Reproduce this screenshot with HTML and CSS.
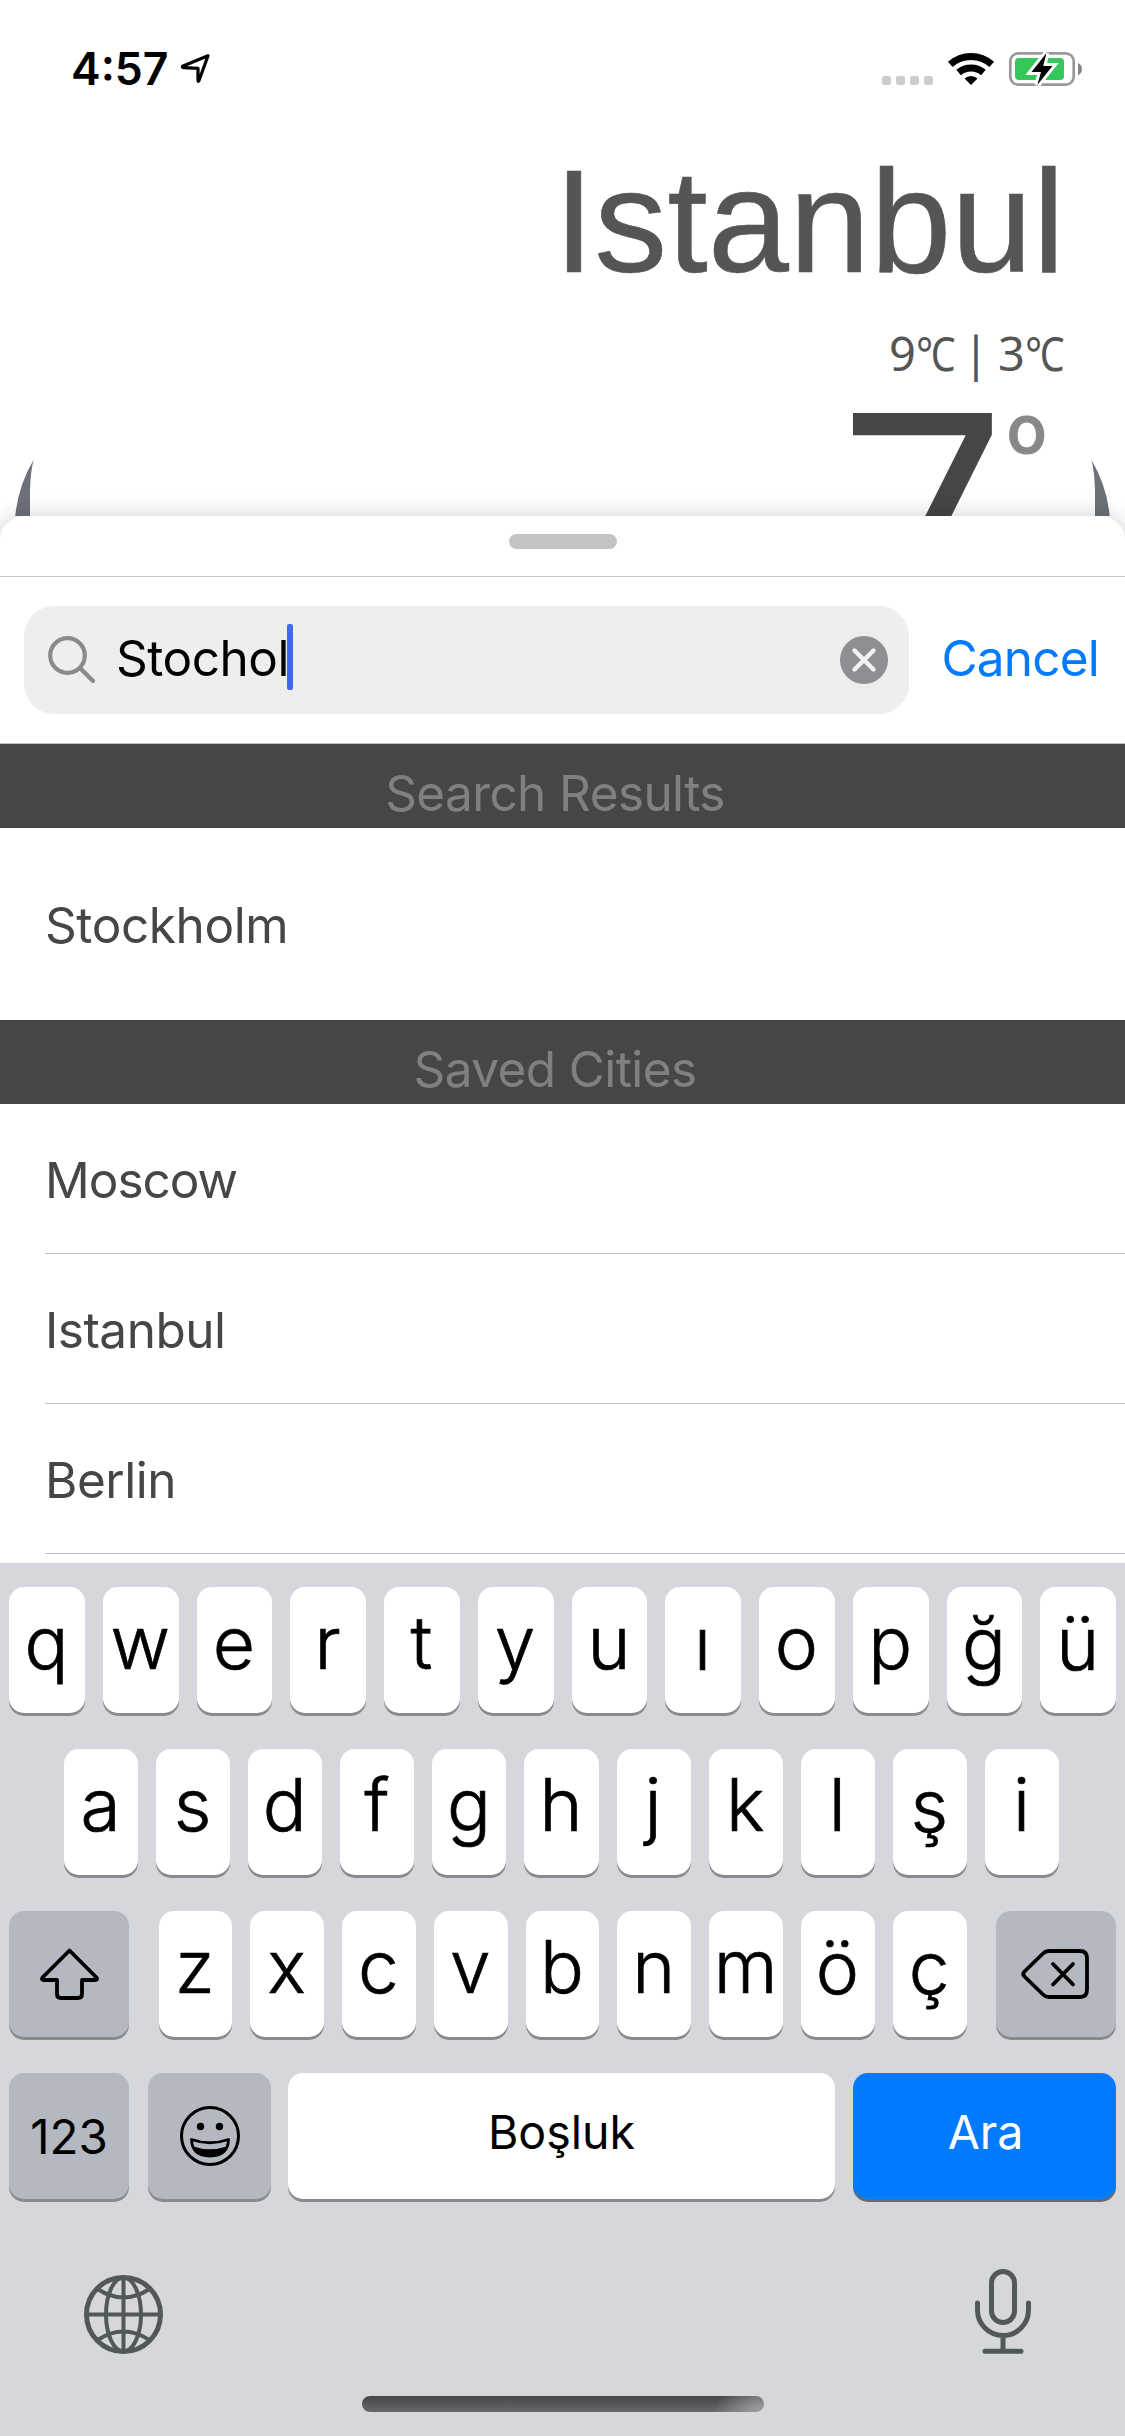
FILE: index.html
```html
<!DOCTYPE html>
<html lang="tr">
<head>
<meta charset="utf-8">
<title>Weather</title>
<link rel="stylesheet" href="styles.css">
</head>
<body>
<div class="screen">
  <header class="weather">
    <div class="status">
      <div class="status-left">
        <span class="clock">4:57</span>
        <svg class="location" viewBox="179 53 32 32" width="32" height="32"><path d="M207 55.800L181.500 66.300Q181 67.500 183 67.700L197 68.400V80Q197 82.500 198 80.500Z" fill="none" stroke="#000" stroke-width="3.200" stroke-linejoin="round"/></svg>
      </div>
      <svg class="status-right" viewBox="880 50 204 38" width="204" height="38">
        <g fill="#ccc"><rect x="882" y="76" width="9" height="9" rx="2.500"/><rect x="896" y="76" width="9" height="9" rx="2.500"/><rect x="910" y="76" width="9" height="9" rx="2.500"/><rect x="924" y="76" width="9" height="9" rx="2.500"/></g>
        <g fill="none" stroke="#000" stroke-width="7"><path d="M950.300 64.300A31 31 0 0 1 991.700 64.300"/><path d="M958.600 72.500A19 19 0 0 1 983.400 72.500"/></g>
        <path d="M964.500 78.500A9.500 9.500 0 0 1 977.500 78.500L971 85Z"/>
        <rect x="1010.300" y="53.300" width="63.400" height="31.400" rx="8" fill="none" stroke="#999" stroke-width="2.700"/>
        <path d="M1078 63Q1082 64.500 1082 69T1078 75.300Z" fill="#888"/>
        <rect x="1015" y="58" width="49" height="22" rx="4" fill="#35c759"/>
        <path d="M1046.500 53L1031.500 72H1041L1037.300 85L1052.500 66H1043.200Z" stroke="#fff" stroke-width="6"/>
        <path d="M1046.500 53L1031.500 72H1041L1037.300 85L1052.500 66H1043.200Z"/>
      </svg>
    </div>
    <h1 class="city">Istanbul</h1>
    <p class="range">9<span class="unit">℃</span> | 3<span class="unit">℃</span></p>
    <p class="temp">7<span class="degree">o</span></p>
    <svg class="card-edges" viewBox="0 456 1125 60" width="1125" height="60"><g fill="#6c7079"><path d="M33.500 460Q17 488 15 520H30V490Q30.500 472 33.500 460Z"/><path d="M1091.500 460Q1108 488 1110 520H1095V490Q1094.500 472 1091.500 460Z"/></g></svg>
  </header>

  <main class="sheet">
    <div class="grabber"><span class="handle"></span></div>
    <div class="searchbar">
      <div class="field">
        <svg viewBox="0 0 50 50" width="50" height="50"><g fill="none" stroke="#8a8a8e" stroke-width="4.200" stroke-linecap="round"><circle cx="20.500" cy="20.500" r="17.300"/><path d="M33.500 33.500L46 46"/></g></svg>
        <span class="query">Stochol</span><span class="caret"></span>
        <svg class="clear" viewBox="0 0 48 48" width="48" height="48"><circle cx="24" cy="24" r="24" fill="#8e8e93"/><path d="M14.500 14.500L33.500 33.500M33.500 14.500L14.500 33.500" stroke="#f2f2f2" stroke-width="4.400" stroke-linecap="round"/></svg>
      </div>
      <span class="cancel">Cancel</span>
    </div>
    <h2 class="section">Search Results</h2>
    <div class="row result">Stockholm</div>
    <h2 class="section">Saved Cities</h2>
    <div class="row tight">Moscow</div>
    <div class="row">Istanbul</div>
    <div class="row">Berlin</div>
  </main>

  <section class="keyboard">
    <div class="keys">
      <span class="key">q</span><span class="key">w</span><span class="key">e</span><span class="key">r</span><span class="key">t</span><span class="key">y</span><span class="key">u</span><span class="key low">ı</span><span class="key">o</span><span class="key">p</span><span class="key low">ğ</span><span class="key low">ü</span>
    </div>
    <div class="keys inset">
      <span class="key">a</span><span class="key">s</span><span class="key">d</span><span class="key">f</span><span class="key">g</span><span class="key">h</span><span class="key">j</span><span class="key">k</span><span class="key">l</span><span class="key low">ş</span><span class="key">i</span>
    </div>
    <div class="keys spread">
      <span class="key special side"><svg viewBox="38 1946 62 56" width="62" height="56"><path d="M69.500 1950.500L42.500 1977.500Q41 1980 43.500 1980H57V1994Q57 1998 61 1998H78Q82 1998 82 1994V1980H95.500Q98 1980 96.500 1977.500Z" fill="none" stroke="#000" stroke-width="3.800" stroke-linejoin="round"/></svg></span>
      <div class="keys middle">
        <span class="key">z</span><span class="key">x</span><span class="key">c</span><span class="key">v</span><span class="key">b</span><span class="key">n</span><span class="key">m</span><span class="key low">ö</span><span class="key low">ç</span>
      </div>
      <span class="key special side"><svg viewBox="1018 1946 75 56" width="75" height="56"><path d="M1048 1951H1079Q1086 1951 1086 1958V1990Q1086 1997 1079 1997H1048Q1044.500 1997 1042 1994.500L1023.500 1976.500Q1021 1974 1023.500 1971.500L1042 1953.500Q1044.500 1951 1048 1951ZM1052 1964L1072 1984.500M1072 1964L1052 1984.500" fill="none" stroke="#000" stroke-width="3.800" stroke-linecap="round" stroke-linejoin="round"/></svg></span>
    </div>
    <div class="keys bottom">
      <span class="key special numbers">123</span>
      <span class="key special emoji"><svg viewBox="0 0 62 62" width="62" height="62"><circle cx="31" cy="31" r="28.500" fill="none" stroke="#000" stroke-width="3"/><circle cx="21.500" cy="21.500" r="3.700"/><circle cx="40.500" cy="21.500" r="3.700"/><path d="M12.500 34.500Q31 41 49.500 34.500Q49 51 31 51Q13 51 12.500 34.500Z" fill="none" stroke="#000" stroke-width="2.800" stroke-linejoin="round"/><path d="M14 41.500Q31 47 48 41.500Q43 51.500 31 51.500T14 41.500Z"/></svg></span>
      <span class="key space">Boşluk</span>
      <span class="key go">Ara</span>
    </div>
    <div class="tools">
      <svg viewBox="83 2274 81 81" width="81" height="81"><g fill="none" stroke="#50585c" stroke-width="4"><circle cx="123.500" cy="2314.500" r="37" stroke-width="5"/><ellipse cx="123.500" cy="2314.500" rx="17.500" ry="37"/><path d="M123.500 2277V2352M86 2314.500H161M97.500 2289Q123.500 2306 149.500 2289M97.500 2340Q123.500 2323 149.500 2340"/></g></svg>
      <svg viewBox="973 2266 60 89" width="60" height="89"><g fill="none" stroke="#50585c" stroke-width="5" stroke-linecap="round"><rect x="991.500" y="2271.500" width="23" height="51" rx="11.500"/><path d="M977.500 2303V2310A25.500 25.500 0 0 0 1028.500 2310V2303M1003 2336V2351M985 2351.300H1021"/></g></svg>
    </div>
    <div class="home"></div>
  </section>
</div>
</body>
</html>
```
FILE: styles.css
```css
* { box-sizing: border-box; }
body { margin: 0; background: #fff; font-family: Inter, "Liberation Sans", sans-serif; }
h1, h2, p { margin: 0; font-weight: 400; }
svg { display: block; flex: none; }

.screen { width: 1125px; height: 2436px; display: flex; flex-direction: column; overflow: hidden; }

.weather { position: relative; height: 516px; flex: none; overflow: hidden; text-align: right; color: #555; }
.status { height: 142px; padding: 50px 41px 0 71px; display: flex; justify-content: space-between; align-items: flex-start; }
.status-left { display: flex; align-items: center; gap: 12px; height: 38px; }
.clock { font-size: 44.5px; font-weight: 600; line-height: 38px; color: #000; }
.city { font: 400 146px/160px "Liberation Sans", Arial, sans-serif; padding-right: 60px; -webkit-text-stroke: .6px #555; }
.range { font: 400 47px/60px "Noto Sans", "Noto Sans CJK JP", sans-serif; word-spacing: -3px; padding: 21px 62px 0 0; height: 81px; }
.unit { display: inline-block; width: 38px; text-align: left; transform: scaleX(.84); transform-origin: left; }
.temp { display: flex; justify-content: flex-end; font-size: 297px; font-weight: 300; line-height: 281px; color: #464646; padding-right: 78px; -webkit-text-stroke: 4px #464646; }
.degree { font-size: 67px; font-weight: 500; line-height: 80px; color: #888; padding-top: 6px; margin-left: 1px; -webkit-text-stroke: 1px #888; }
.card-edges { position: absolute; left: 0; bottom: 0; }

.sheet { position: relative; height: 1047px; flex: none; background: #fff; border-radius: 24px 24px 0 0; box-shadow: 0 0 22px rgba(0, 0, 0, .2); }
.grabber { height: 61px; padding-top: 18px; border-bottom: 1px solid #c8c8c8; }
.handle { display: block; width: 108px; height: 15px; margin: 0 auto; border-radius: 7.5px; background: #c2c3c3; }
.searchbar { height: 167px; padding: 0 26px 0 24px; display: flex; align-items: center; justify-content: space-between; border-bottom: 1px solid #c0c0c0; }
.field { width: 885px; height: 108px; padding: 0 21px 0 23px; display: flex; align-items: center; border-radius: 30px; background: #eee; }
.query { margin: -4px 0 0 19px; font-size: 49.5px; letter-spacing: -.5px; color: #000; }
.caret { width: 6px; height: 66px; margin: -6px 0 0 -2px; border-radius: 2px; background: #4169ef; }
.clear { margin-left: auto; }
.cancel { margin-top: -4px; font-size: 49.5px; letter-spacing: -.8px; color: #007aff; }
.section { height: 84px; padding: 15px 15px 0 0; line-height: 69px; font-size: 49.5px; letter-spacing: -.6px; text-align: center; color: #808080; background: #464646; }
.row { height: 150px; margin-left: 45px; padding-top: 3px; line-height: 147px; font-size: 49.5px; letter-spacing: -.5px; color: #464646; border-bottom: 1px solid #c0c0c0; }
.row.tight { letter-spacing: -1px; }
.row.result { height: 192px; padding-top: 2px; line-height: 190px; letter-spacing: -.4px; border: 0; }

.keyboard { position: relative; flex: 1; padding: 24px 9px 0; background: #d6d7dc; display: flex; flex-direction: column; }
.keys { display: flex; gap: 18px; height: 126px; margin-bottom: 36px; }
.key { flex: 1 1 0; display: flex; align-items: center; justify-content: center; padding: 0 1px 16px 0; border-radius: 15px; background: #fff; box-shadow: 0 3px 0 #898a8d; font-size: 73px; font-weight: 300; color: #000; -webkit-text-stroke: .7px #000; }
.key.low { padding-bottom: 13px; }
.inset { padding: 0 57px 0 55px; }
.spread { justify-content: space-between; gap: 0; }
.middle { width: 808px; margin: 0; }
.key.special { background: #b3b8c1; padding: 0; -webkit-text-stroke: 0; }
.key.side { flex: 0 0 120px; }
.bottom { gap: 0; }
.key.numbers { flex: 0 0 120px; margin-right: 19px; font-size: 47.5px; font-weight: 400; }
.key.emoji { flex: 0 0 123px; margin-right: 17px; }
.key.space { flex: 0 0 547px; margin-right: 18px; font-size: 46.5px; font-weight: 400; padding: 0 0 8px; -webkit-text-stroke: 0; }
.key.go { font-size: 46.5px; font-weight: 400; padding: 0 0 8px 2px; color: #fff; background: #007aff; box-shadow: 0 3px 0 #686a70; -webkit-text-stroke: 0; }
.tools { display: flex; justify-content: space-between; align-items: flex-end; height: 88px; margin-top: 32px; padding: 0 83px 0 74px; }
.home { width: 402px; height: 16px; margin: 41px 0 0 353px; border-radius: 8px; background: radial-gradient(ellipse 50px 34px at 100% 100%, rgba(180, 180, 184, .8), rgba(180, 180, 184, 0)), linear-gradient(#444548, #68696b); }
```
